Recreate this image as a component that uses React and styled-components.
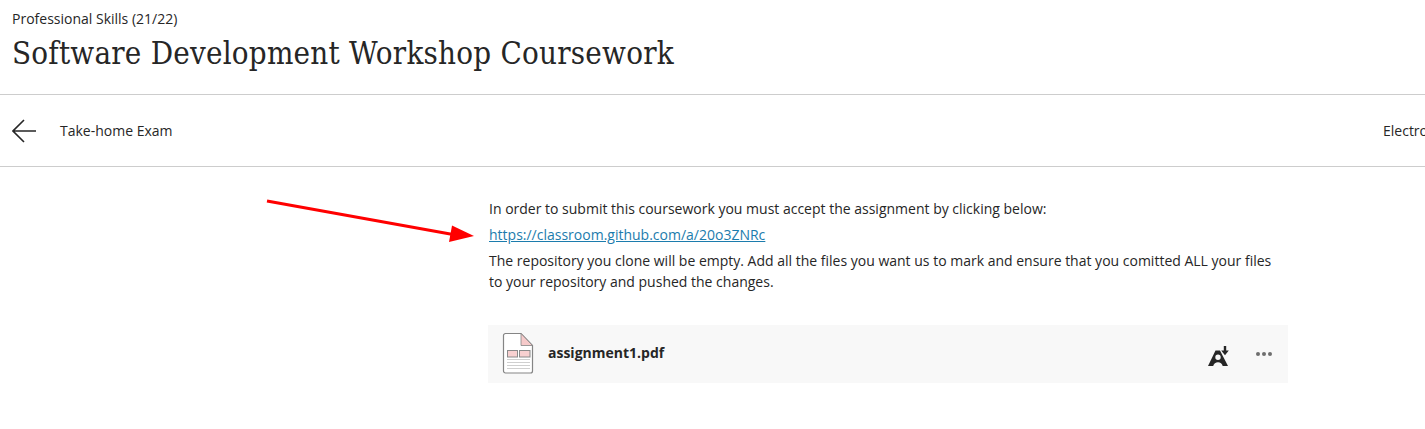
import React from "react";
import styled, { createGlobalStyle } from "styled-components";

const GlobalStyle = createGlobalStyle`
  html, body {
    margin: 0;
    background: #fff;
    overflow: hidden;
  }
  body {
    font-family: "Open Sans", sans-serif;
    color: #262626;
  }
`;

export default function App() {
  return (
    <Page>
      <GlobalStyle />
      <Header>
        <Breadcrumb>Professional Skills (21/22)</Breadcrumb>
        <Title>Software Development Workshop Coursework</Title>
      </Header>
      <Nav>
        <BackLink>
          <svg width="24" height="24" viewBox="0 0 24 24" fill="none" stroke="#262626" strokeWidth="1.6">
            <path d="M24 12H1.5M12 1L1 12l11 11" />
          </svg>
          <NavLabel>Take-home Exam</NavLabel>
        </BackLink>
        <NextLabel>Electronic</NextLabel>
      </Nav>
      <Content>
        <Body>
          <Line>In order to submit this coursework you must accept the assignment by clicking below:</Line>
          <LinkLine>
            <Link href="#">https://classroom.github.com/a/20o3ZNRc</Link>
          </LinkLine>
          <Para>
            The repository you clone will be empty. Add all the files you want us to mark and ensure that you comitted ALL your files
            to your repository and pushed the changes.
          </Para>
        </Body>
        <FileCard>
          <FileIcon />
          <FileName>assignment1.pdf</FileName>
          <Actions>
            <AltIcon />
            <Dots>
              <Dot />
              <Dot />
              <Dot />
            </Dots>
          </Actions>
        </FileCard>
      </Content>
      <Annotation width="212" height="46" viewBox="0 0 212 46">
        <path d="M1 2L187 35.500" stroke="#ff0000" strokeWidth="3" />
        <polygon points="186,26.500 208,37 183,43" fill="#ff0000" />
      </Annotation>
    </Page>
  );
}

function FileIcon() {
  return (
    <svg width="32" height="42" viewBox="0 0 32 42" fill="none">
      <path d="M3.500 1.500h15.500l11.500 12v25.500a2 2 0 0 1-2 2H3.500a2 2 0 0 1-2-2v-35.500a2 2 0 0 1 2-2z" fill="#fff" stroke="#858585" strokeWidth="1.200" />
      <path d="M19 1.500l11.500 12H19z" fill="#f6caca" stroke="#858585" strokeWidth="0.800" />
      <rect x="5.500" y="18.500" width="10" height="6.500" fill="#f8d0d0" stroke="#8a8a8a" strokeWidth="1" />
      <rect x="17.500" y="18.500" width="10.500" height="6.500" fill="#f8d0d0" stroke="#8a8a8a" strokeWidth="1" />
      <path d="M5 27.500h23M5 30.500h23M5 33.500h23M5 36.500h23" stroke="#cfcfcf" strokeWidth="1" />
    </svg>
  );
}

function AltIcon() {
  return (
    <AltSvg width="22" height="22" viewBox="0 0 22 22" fill="#262626">
      <path fillRule="evenodd" d="M1 21L8.500 5.500h4.500L21 21h-5.300c-0.500-2.500-2.400-3.800-4.700-3.800s-4.300 1.300-4.800 3.800zM11 9.500a2.700 2.700 0 1 0 0.010 5.400a2.700 2.700 0 0 0 -0.010-5.400z" />
      <path d="M16.800 1h2.400v4.500h2.600l-3.800 4.700-3.800-4.700h2.600z" stroke="#f8f8f8" strokeWidth="0.800" paintOrder="stroke" />
    </AltSvg>
  );
}

const Page = styled.div`
  position: relative;
  width: 1425px;
  height: 429px;
  overflow: hidden;
`;

const Header = styled.header`
  height: 84px;
  padding: 9px 12px 1px;
  border-bottom: 1px solid #cdcdcd;
`;

const Breadcrumb = styled.div`
  font-size: 14px;
  line-height: 19px;
`;

const Title = styled.h1`
  margin: 5px 0 0;
  font-family: "DejaVu Serif Condensed", "DejaVu Serif", serif;
  font-stretch: condensed;
  font-size: 31px;
  font-weight: 400;
  letter-spacing: 0.23px;
  line-height: 40px;
  white-space: nowrap;
`;

const Nav = styled.nav`
  display: flex;
  align-items: center;
  justify-content: space-between;
  height: 71px;
  padding-left: 12px;
  border-bottom: 1px solid #cdcdcd;
  overflow: hidden;
`;

const BackLink = styled.div`
  display: flex;
  align-items: center;
  gap: 24px;
`;

const NavLabel = styled.span`
  font-size: 14px;
`;

const NextLabel = styled.span`
  font-size: 14px;
  width: 42px;
  overflow: hidden;
  white-space: nowrap;
`;

const Content = styled.main`
  width: 800px;
  margin-left: 488px;
  padding-top: 31px;
`;

const Body = styled.div`
  padding: 0 1px;
  font-size: 14px;
  line-height: 21px;
`;

const Line = styled.div`
  height: 21px;
`;

const LinkLine = styled.div`
  margin-top: 5px;
  height: 21px;
`;

const Link = styled.a`
  color: #1c7cad;
  text-decoration: underline;
`;

const Para = styled.p`
  margin: 5px 0 0;
  width: 790px;
`;

const FileCard = styled.div`
  display: flex;
  align-items: center;
  height: 58px;
  margin-top: 33px;
  padding: 0 16px 2px 14px;
  background: #f8f8f8;
  box-sizing: border-box;
`;

const FileName = styled.span`
  margin: 0 0 2px 14px;
  font-size: 14px;
  font-weight: 700;
`;

const Actions = styled.div`
  display: flex;
  align-items: center;
  gap: 27px;
  margin-left: auto;
`;

const AltSvg = styled.svg`
  margin-top: 6px;
`;

const Dots = styled.div`
  display: flex;
  gap: 2px;
  margin-top: 2px;
`;

const Dot = styled.span`
  width: 4px;
  height: 4px;
  border-radius: 50%;
  background: #6e6e6e;
`;

const Annotation = styled.svg`
  position: absolute;
  left: 266px;
  top: 199px;
`;
